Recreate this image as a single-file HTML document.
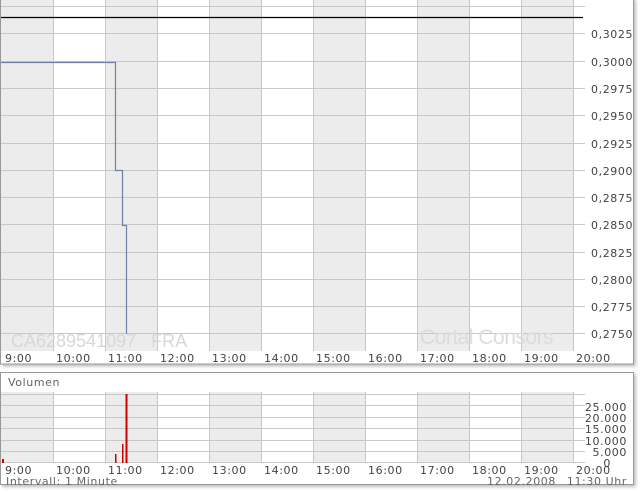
<!DOCTYPE html>
<html><head><meta charset="utf-8"><style>
html,body{margin:0;padding:0;background:#fff;width:640px;height:492px;overflow:hidden}
svg text{font-family:"DejaVu Sans","Liberation Sans",sans-serif;font-size:11px;fill:#444;letter-spacing:0.6px}
</style></head><body>
<svg width="640" height="492" viewBox="0 0 640 492">
<defs><filter id="sh" x="-5%" y="-5%" width="110%" height="115%"><feDropShadow dx="2" dy="2" stdDeviation="1.5" flood-color="#000" flood-opacity="0.25"/></filter></defs>
<rect x="0.5" y="-2" width="633" height="366" fill="#fff" stroke="#999" filter="url(#sh)"/>
<rect x="0.5" y="372.5" width="633" height="112" fill="#fff" stroke="#999" filter="url(#sh)"/>
<g fill="#ececec">
<rect x="1" y="0" width="52" height="351"/><rect x="105" y="0" width="52" height="351"/><rect x="209" y="0" width="52" height="351"/><rect x="313" y="0" width="52" height="351"/><rect x="417" y="0" width="52" height="351"/><rect x="521" y="0" width="52" height="351"/>
<rect x="1" y="392" width="52" height="71"/><rect x="105" y="392" width="52" height="71"/><rect x="209" y="392" width="52" height="71"/><rect x="313" y="392" width="52" height="71"/><rect x="417" y="392" width="52" height="71"/><rect x="521" y="392" width="52" height="71"/>
</g>
<g stroke="#c8c8c8" stroke-width="1">
<path d="M53.5 0V351M105.5 0V351M157.5 0V351M209.5 0V351M261.5 0V351M313.5 0V351M365.5 0V351M417.5 0V351M469.5 0V351M521.5 0V351M573.5 0V351"/>
<path d="M1 6.5H585M1 33.5H585M1 61.5H585M1 88.5H585M1 115.5H585M1 143.5H585M1 170.5H585M1 197.5H585M1 224.5H585M1 252.5H585M1 279.5H585M1 306.5H585M1 333.5H585"/>
<path d="M53.5 392V463M105.5 392V463M157.5 392V463M209.5 392V463M261.5 392V463M313.5 392V463M365.5 392V463M417.5 392V463M469.5 392V463M521.5 392V463M573.5 392V463"/>
<path d="M1 394.5H585M1 405.5H585M1 417.5H585M1 428.5H585M1 440.5H585M1 451.5H585M1 462.5H585"/>
</g>
<line x1="1" y1="17.5" x2="583" y2="17.5" stroke="#000" stroke-width="1.3"/>
<text x="11" y="347" style="font-size:18px;fill:#d8d8d8;font-family:'Liberation Sans',sans-serif;letter-spacing:0">CA6289541097 &#160;&#160;FRA</text>
<text x="420" y="344" style="font-size:21px;fill:#dcdcdc;font-family:'Liberation Sans',sans-serif;letter-spacing:-0.5px">Cortal Consors</text>
<path d="M1 62.5H115.5V170.5H122.5V225.5H126.5V334" fill="none" stroke="#6f80a8" stroke-width="1.2"/>
<g fill="#cc0000"><rect x="2" y="459" width="2" height="4"/><rect x="115" y="454" width="1.5" height="9"/><rect x="122" y="444" width="1.5" height="19"/><rect x="125.5" y="394" width="2" height="69"/></g>
<g>
<text x="591" y="38">0,3025</text><text x="591" y="66">0,3000</text><text x="591" y="93">0,2975</text><text x="591" y="120">0,2950</text><text x="591" y="148">0,2925</text><text x="591" y="175">0,2900</text><text x="591" y="202">0,2875</text><text x="591" y="229">0,2850</text><text x="591" y="257">0,2825</text><text x="591" y="284">0,2800</text><text x="591" y="311">0,2775</text><text x="591" y="338">0,2750</text>
</g>
<g>
<text x="5" y="362">9:00</text><text x="56" y="362">10:00</text><text x="108" y="362">11:00</text><text x="160" y="362">12:00</text><text x="212" y="362">13:00</text><text x="264" y="362">14:00</text><text x="316" y="362">15:00</text><text x="368" y="362">16:00</text><text x="420" y="362">17:00</text><text x="472" y="362">18:00</text><text x="524" y="362">19:00</text><text x="576" y="362">20:00</text>
<text x="5" y="474">9:00</text><text x="56" y="474">10:00</text><text x="108" y="474">11:00</text><text x="160" y="474">12:00</text><text x="212" y="474">13:00</text><text x="264" y="474">14:00</text><text x="316" y="474">15:00</text><text x="368" y="474">16:00</text><text x="420" y="474">17:00</text><text x="472" y="474">18:00</text><text x="524" y="474">19:00</text><text x="576" y="474">20:00</text>
</g>
<text x="8" y="386" style="fill:#666">Volumen</text>
<g text-anchor="end">
<text x="627" y="411">25.000</text><text x="627" y="422">20.000</text><text x="627" y="433">15.000</text><text x="627" y="445">10.000</text><text x="627" y="456">5.000</text><text x="611" y="467">0</text>
<text x="556" y="485" style="fill:#666">12.02.2008</text>
<text x="627" y="485" style="fill:#666">11:30 Uhr</text>
</g>
<text x="6" y="485" style="fill:#666">Intervall: 1 Minute</text>
</svg>
</body></html>
